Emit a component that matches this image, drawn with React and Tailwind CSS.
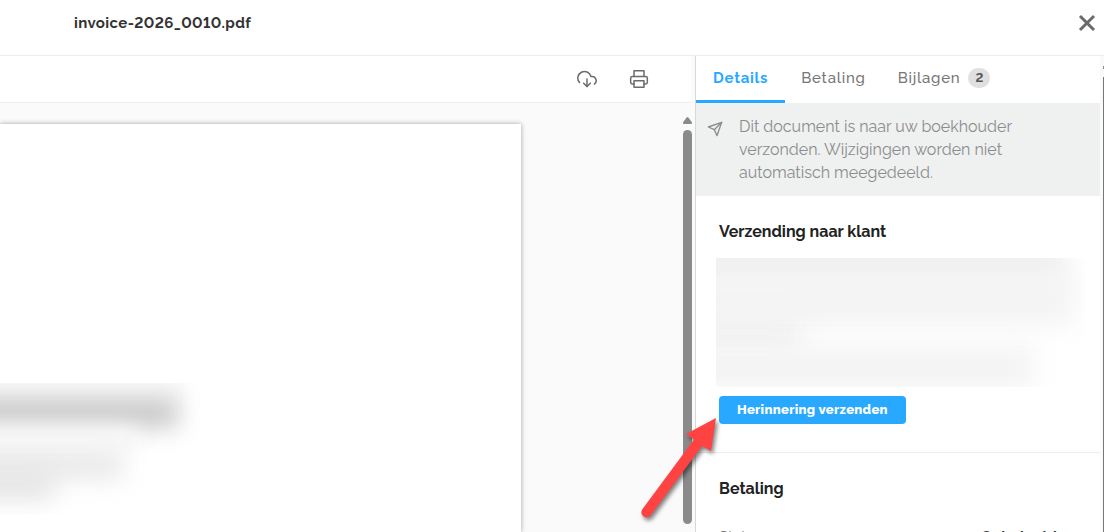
import React, { useState } from 'react';
import { FiDownloadCloud, FiPrinter, FiSend } from 'react-icons/fi';

const tabs = [
  { id: 'details', label: 'Details' },
  { id: 'payment', label: 'Betaling' },
  { id: 'attachments', label: 'Bijlagen', count: 2 },
];

// Title bar with file name and close button
const Header = () => (
  <header className="flex h-14 shrink-0 items-center justify-between border-b border-[#ececec] bg-white pr-2 pb-2.5 pl-[74px]">
    <h1 className="text-[15px] leading-5 font-bold tracking-wide text-[#333]">invoice-2026_0010.pdf</h1>
    <button type="button" aria-label="Sluiten" className="text-[#6b6b6b]">
      <svg width="18" height="18" viewBox="0 0 18 18" fill="none" stroke="currentColor" strokeWidth="3">
        <path d="M2 2l14 14M16 2L2 16" />
      </svg>
    </button>
  </header>
);

// Vertical scroll track with arrow and thumb
const ScrollTrack = () => (
  <div className="flex w-3 shrink-0 flex-col items-center gap-1.5 pt-3.5 pr-1 pb-2" aria-hidden="true">
    <svg width="9" height="7" viewBox="0 0 9 7" className="shrink-0 fill-[#8a8a8a]">
      <path d="M3.6 .6Q4.5-.4 5.4.6L9 5.4Q9.2 7 8 7H1Q-.2 7 0 5.4Z" />
    </svg>
    <div className="w-[9px] flex-1 rounded-full bg-[#8a8a8a]" />
  </div>
);

const Preview = () => (
  <section className="flex min-w-0 flex-1 flex-col bg-[#fafafa]">
    <div className="mr-1 flex h-[47px] shrink-0 items-center justify-end gap-8 border-b border-[#eee] bg-white pr-[42px] text-[#6b6b6b]">
      <button type="button" aria-label="Downloaden">
        <FiDownloadCloud size={20} strokeWidth={1.8} />
      </button>
      <button type="button" aria-label="Afdrukken">
        <FiPrinter size={20} strokeWidth={1.8} />
      </button>
    </div>
    <div className="flex min-h-0 flex-1">
      <div className="min-w-0 flex-1 pt-[21px] pr-[162px]">
        <div className="h-full bg-white pt-[259px] shadow-[0_0_5px_rgba(0,0,0,0.35)]">
          {/* Hidden address lines */}
          <div className="h-[131px] w-56 overflow-hidden">
            <div className="-ml-8 h-4 w-[215px] bg-[#f4f4f4] blur-[10px]" />
            <div className="-ml-8 h-7 w-[210px] bg-[#c4c4c4] blur-[12px]" />
            <div className="-ml-8 h-6 w-[170px] bg-[#f8f8f8] blur-[10px]" />
            <div className="-ml-8 h-7 w-[154px] bg-[#e8e8e8] blur-[12px]" />
            <div className="-mt-2 -ml-8 h-7 w-[86px] bg-[#e4e4e4] blur-[12px]" />
          </div>
        </div>
      </div>
      <ScrollTrack />
    </div>
  </section>
);

const PointerArrow = () => (
  <svg
    className="pointer-events-none absolute top-5 right-full h-[108px] w-20 overflow-visible drop-shadow-[2px_3px_2px_rgba(0,0,0,0.5)]"
    viewBox="0 0 80 108"
    fill="#ff4343"
    aria-hidden="true"
  >
    <path d="M77 2L47 18L55 23.5L3.5 93A5 5 0 0 0 11.5 99.5L63 30L72 35Z" />
  </svg>
);

const DetailsPanel = () => {
  const [activeTab, setActiveTab] = useState('details');

  return (
    <aside className="flex w-[409px] shrink-0 border-l border-[#d8d8d8] bg-white">
      <div className="min-w-0 flex-1">
        <nav className="flex h-[47px]">
          {tabs.map((tab) => {
            const isActive = activeTab === tab.id;
            return (
              <button
                key={tab.id}
                type="button"
                onClick={() => setActiveTab(tab.id)}
                className={`flex items-center gap-2 border-b-3 text-[15px] leading-5 tracking-wider ${
                  isActive ? 'border-[#28a9ff] px-[17px] font-bold text-[#28a9ff]' : 'border-transparent px-4 font-medium text-[#777]'
                }`}
              >
                {tab.label}
                {tab.count && (
                  <span className="flex h-5 w-[22px] items-center justify-center rounded-full bg-[#e0e0e0] text-[13px] font-bold tracking-normal text-[#555]">
                    {tab.count}
                  </span>
                )}
              </button>
            );
          })}
        </nav>

        <div className="flex gap-4 bg-[#eff1f1] py-3 pr-[72px] pl-[11px] text-[#8c8c8c]">
          <FiSend size={16} className="mt-1.5 shrink-0" />
          <p className="text-base leading-[23px]">
            Dit document is naar uw boekhouder verzonden. Wijzigingen worden niet automatisch meegedeeld.
          </p>
        </div>

        <section className="border-b border-[#ececec] px-[23px] pt-6 pb-7">
          <h2 className="text-base leading-6 font-bold text-[#222]">Verzending naar klant</h2>
          {/* Hidden mail history */}
          <div className="mt-3.5 -mr-2 -ml-[3px] h-[129px] overflow-hidden">
            <div className="-mt-4 -ml-8 h-11 w-[382px] bg-[#efefef] blur-[12px]" />
            <div className="-mt-3 -ml-8 h-13 w-[390px] bg-[#f4f4f4] blur-[12px]" />
            <div className="-mt-2 -ml-8 h-9 w-[116px] bg-[#f0f0f0] blur-[12px]" />
            <div className="-mt-2 -ml-8 h-11 w-[350px] bg-[#f4f4f4] blur-[12px]" />
          </div>
          <div className="relative mt-[9px] flex">
            <button type="button" className="h-7 rounded bg-[#28a9ff] px-[18px] text-[13px] leading-5 font-extrabold tracking-wide text-white">
              Herinnering verzenden
            </button>
            <PointerArrow />
          </div>
        </section>

        <section className="px-[23px] pt-6">
          <h2 className="text-base leading-6 font-bold text-[#222]">Betaling</h2>
          <dl className="mt-6 flex justify-between pr-5 text-[15px] leading-6">
            <dt className="text-[#777]">Status</dt>
            <dd className="font-bold text-[#333]">Onbetaald</dd>
          </dl>
        </section>
      </div>

      <div className="flex w-1 shrink-0 flex-col items-end gap-2 bg-[#fafafa] pt-2.5" aria-hidden="true">
        <div className="h-[3px] w-px bg-[#8a8a8a]" />
        <div className="w-px flex-1 bg-[#777]" />
      </div>
    </aside>
  );
};

const App = () => (
  <div className="flex h-screen flex-col overflow-hidden bg-white font-['Raleway','Open_Sans','Noto_Sans',sans-serif] lining-nums">
    <Header />
    <main className="flex min-h-0 flex-1">
      <Preview />
      <DetailsPanel />
    </main>
  </div>
);

export default App;
